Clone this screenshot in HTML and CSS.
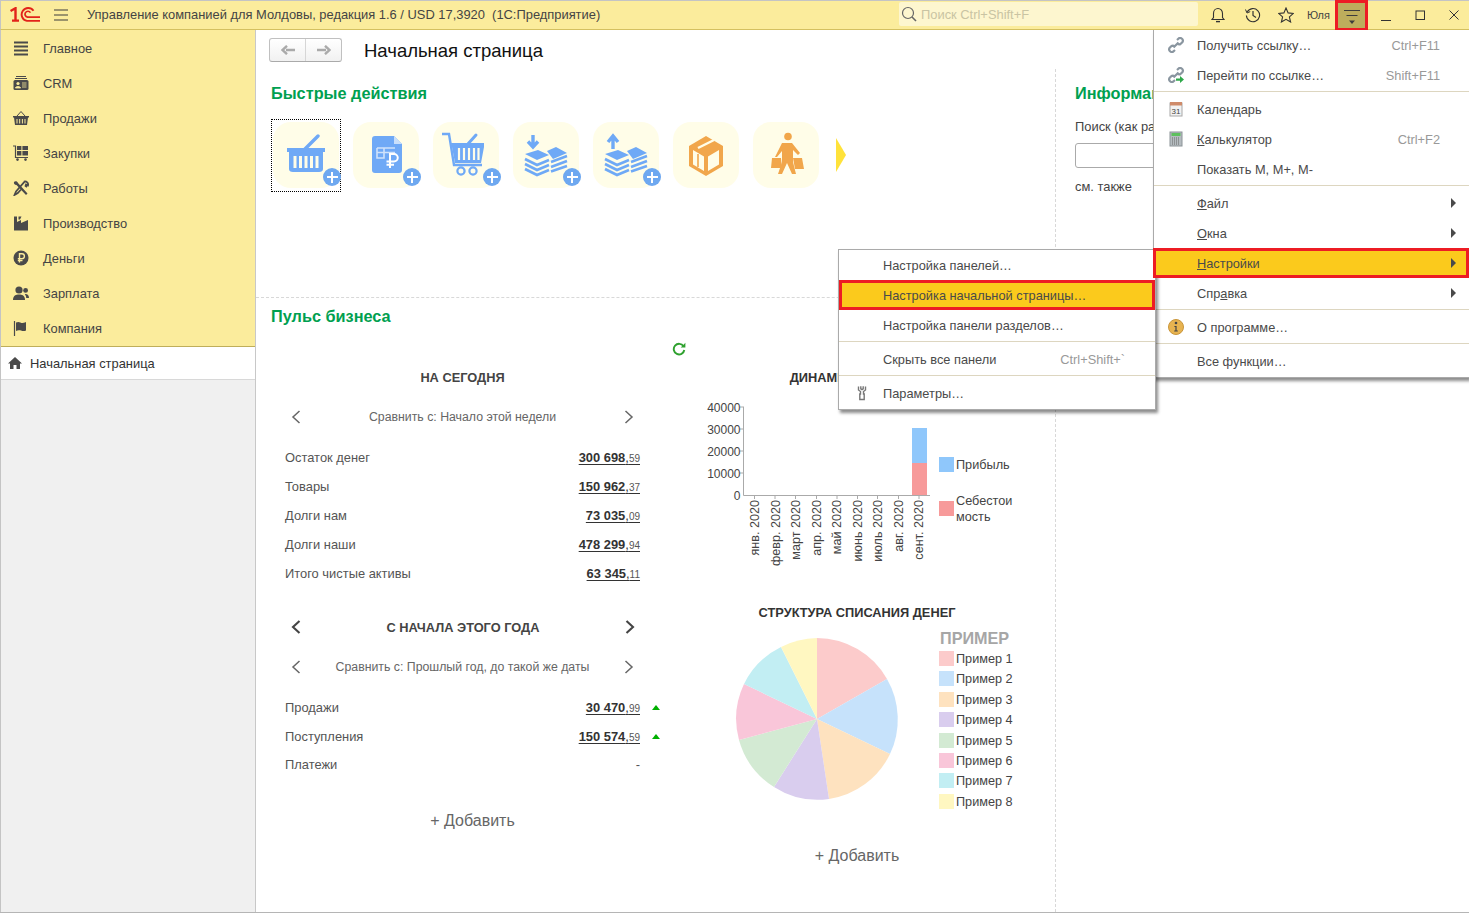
FILE: index.html
```html
<!DOCTYPE html>
<html lang="ru">
<head>
<meta charset="utf-8">
<title>Начальная страница</title>
<link rel="stylesheet" href="styles.css">
</head>
<body>
<div class="window">
  <header class="titlebar">
    <svg class="logo" viewBox="0 0 30 15" width="30" height="15">
      <path d="M0.5 4L5.5 1.2V13.5M2 13.6H9" fill="none" stroke="#e2231a" stroke-width="2.4"/>
      <path d="M23.5 3.8A6.5 6.5 0 1 0 17 13.9H30" fill="none" stroke="#e2231a" stroke-width="1.9"/>
      <path d="M20.5 5.6A3 3 0 1 0 17.5 10.2H30" fill="none" stroke="#e2231a" stroke-width="1.7"/>
    </svg>
    <svg class="burger" viewBox="0 0 14 12" width="14" height="12"><path d="M0 1H14M0 6H14M0 11H14" stroke="#3c3c3c" stroke-width="1"/></svg>
    <span class="apptitle">Управление компанией для Молдовы, редакция 1.6 / USD 17,3920&nbsp; (1С:Предприятие)</span>
    <div class="search">
      <svg viewBox="0 0 16 16" width="16" height="16"><circle cx="7" cy="7" r="5.5" fill="none" stroke="#666" stroke-width="1.2"/><path d="M11 11L15 15" stroke="#666" stroke-width="1.6"/></svg>
      <span>Поиск Ctrl+Shift+F</span>
    </div>
    <div class="tools">
      <svg class="t-bell" viewBox="0 0 16 16" width="16" height="16"><path d="M2 12.5H14L12.5 10.5V6.5C12.5 3.5 10.5 1.5 8 1.5S3.5 3.5 3.5 6.5V10.5Z" fill="none" stroke="#333" stroke-width="1.1"/><path d="M6 14.6H10" stroke="#333" stroke-width="1.4"/></svg>
      <svg class="t-hist" viewBox="0 0 16 16" width="16" height="16"><path d="M2.2 5A6.6 6.6 0 1 1 1.4 8.5" fill="none" stroke="#333" stroke-width="1.1"/><path d="M0.5 2.5L2 6L5.2 4.6" fill="none" stroke="#333" stroke-width="1"/><path d="M8 4V8.5L11 10.5" fill="none" stroke="#333" stroke-width="1.2"/></svg>
      <svg class="t-star" viewBox="0 0 16 16" width="16" height="16"><path d="M8 1L10.1 5.9L15.4 6.4L11.4 9.9L12.6 15L8 12.3L3.4 15L4.6 9.9L0.6 6.4L5.9 5.9Z" fill="none" stroke="#333" stroke-width="1.1"/></svg>
      <span class="user">Юля</span>
      <div class="menubtn">
        <svg viewBox="0 0 16 20" width="16" height="20"><path d="M0 4.5H16M2.5 9.5H13.5" stroke="#3c3c3c" stroke-width="1"/><path d="M5 14.5H11L8 18Z" fill="#3c3c3c"/></svg>
      </div>
      <svg class="w-min" viewBox="0 0 12 12" width="12" height="12"><path d="M1 11.5H11" stroke="#333" stroke-width="1"/></svg>
      <svg class="w-max" viewBox="0 0 12 12" width="12" height="12"><rect x="2" y="2" width="8.5" height="8.5" fill="none" stroke="#333" stroke-width="1"/></svg>
      <svg class="w-close" viewBox="0 0 12 12" width="12" height="12"><path d="M1.5 1.5L10.5 10.5M10.5 1.5L1.5 10.5" stroke="#333" stroke-width="1"/></svg>
    </div>
  </header>

  <div class="workspace">
    <nav class="sidebar">
      <ul class="sections">
        <li><svg viewBox="0 0 16 16" width="16" height="16"><path d="M1 2.5H15M1 6.5H15M1 10.5H15M1 14.5H15" stroke="#4a4a4a" stroke-width="2"/></svg>Главное</li>
        <li><svg viewBox="0 0 16 16" width="16" height="16"><path d="M3 1.5H13M2 3.5H14" stroke="#4a4a4a" stroke-width="1"/><rect x="0.5" y="5" width="15" height="10" rx="1.5" fill="#4a4a4a"/><circle cx="5" cy="8.5" r="1.6" fill="#fbec9c"/><path d="M2.4 13C2.6 11 7.4 11 7.6 13ZM9 8H13.5M9 10H13.5M9 12H13.5" fill="#fbec9c" stroke="#fbec9c" stroke-width=".8"/></svg>CRM</li>
        <li><svg viewBox="0 0 16 16" width="16" height="16"><path d="M4 6L8 1.5L12 6" fill="none" stroke="#4a4a4a" stroke-width="1"/><path d="M0 6H16V7.5H15L14 15H2L1 7.5H0Z" fill="#4a4a4a"/><path d="M4 9V13.5M6.7 9V13.5M9.4 9V13.5M12 9V13.5" stroke="#fbec9c" stroke-width="1"/></svg>Продажи</li>
        <li><svg viewBox="0 0 16 16" width="16" height="16"><path d="M0 1H2.5V12.5H15" fill="none" stroke="#4a4a4a" stroke-width="1.2"/><path d="M4 1H8.4V5H4ZM9.4 1H15V5H9.4ZM4 6H8.4V10.5H4ZM9.4 6H15V10.5H9.4Z" fill="#4a4a4a"/><circle cx="4.5" cy="14.6" r="1.3" fill="#4a4a4a"/><circle cx="12.5" cy="14.6" r="1.3" fill="#4a4a4a"/></svg>Закупки</li>
        <li><svg viewBox="0 0 16 16" width="16" height="16"><path d="M1 2C2 .5 4.5 1 5 3L14.5 13.5L13 15L3.5 5C1.5 5 .5 3.5 1 2Z" fill="#4a4a4a"/><path d="M11 1.5A3.2 3.2 0 0 1 15 5.5L13 4.5L12.5 6L14 7M11.6 1.6L3 11.5L1.5 15L4.8 13L8 9.5" fill="none" stroke="#4a4a4a" stroke-width="1.7"/></svg>Работы</li>
        <li><svg viewBox="0 0 16 16" width="16" height="16"><path d="M1 1.5H4V7L8 5V8L15 5V15.5H1Z" fill="#4a4a4a"/><path d="M5.5 1.5H8.5L7 4.5H5.5Z" fill="#4a4a4a"/></svg>Производство</li>
        <li><svg viewBox="0 0 16 16" width="16" height="16"><circle cx="8" cy="8" r="7.5" fill="#4a4a4a"/><path d="M6.5 12.5V3.8H9A2.3 2.3 0 0 1 9 8.6H4.8M4.8 10.5H9.5" fill="none" stroke="#fbec9c" stroke-width="1.4"/></svg>Деньги</li>
        <li><svg viewBox="0 0 16 16" width="16" height="16"><circle cx="6" cy="5" r="3.6" fill="#4a4a4a"/><path d="M0 15C0 10.5 3 9.5 6 9.5S12 10.5 12 15Z" fill="#4a4a4a"/><circle cx="12.6" cy="5.4" r="2.4" fill="#4a4a4a"/><path d="M12.5 9C14.6 9 16 10.5 16 13H13.2C13.2 11.5 12.9 10.5 11.8 9.6Z" fill="#4a4a4a"/></svg>Зарплата</li>
        <li><svg viewBox="0 0 16 16" width="16" height="16"><path d="M1.5 1V16" stroke="#4a4a4a" stroke-width="1.2"/><path d="M3 2.5C6 1 7.5 3 9.5 3S12.5 2 13 2V10.5C11 11.5 9.5 11 8 10.5S4.5 10 3 11Z" fill="#4a4a4a"/></svg>Компания</li>
      </ul>
      <div class="opened">
        <svg viewBox="0 0 14 12" width="14" height="12"><path d="M7 0L14 6.5H12V12H8.5V8H5.5V12H2V6.5H0Z" fill="#4a4a4a"/></svg>
        Начальная страница
      </div>
    </nav>

    <main class="main">
      <div class="pagehead">
        <div class="histnav">
          <span class="histbtn"><svg viewBox="0 0 14 10" width="14" height="10"><path d="M14 5H5M6 .8L1.5 5L6 9.2" fill="none" stroke="#aaa" stroke-width="2.4"/></svg></span>
          <span class="histbtn"><svg viewBox="0 0 14 10" width="14" height="10"><path d="M0 5H9M8 .8L12.5 5L8 9.2" fill="none" stroke="#aaa" stroke-width="2.4"/></svg></span>
        </div>
        <h1>Начальная страница</h1>
      </div>

      <div class="columns">
        <div class="leftcol">
          <section class="quick">
            <h2>Быстрые действия</h2>
            <div class="tiles">
              <div class="tile focused">
                <svg viewBox="0 0 66 66" width="66" height="66"><path d="M32 27L45 14" stroke="#6fa9f6" stroke-width="3.4" stroke-linecap="round"/><path d="M14 26H52V30H50V47Q50 50 46 50H20Q16 50 16 47V30H14Z" fill="#6fa9f6"/><path d="M22 34V46M27.5 34V46M33 34V46M38.5 34V46M44 34V46" stroke="#fffde8" stroke-width="3"/></svg>
                <span class="plus"></span>
              </div>
              <div class="tile">
                <svg viewBox="0 0 66 66" width="66" height="66"><path d="M22 14H41L49 22V48Q49 51 46 51H22Q19 51 19 48V17Q19 14 22 14Z" fill="#6fa9f6"/><path d="M41 14L49 22H41Z" fill="#c9dffb"/><path d="M24 26H42M24 26V36H31V26M24 30.5H42" fill="none" stroke="#cfe2fb" stroke-width="1.6"/><path d="M37 46V32H41A3.6 3.6 0 0 1 41 39.5H33.5M33.5 42.8H41" fill="none" stroke="#fff" stroke-width="2"/></svg>
                <span class="plus"></span>
              </div>
              <div class="tile">
                <svg viewBox="0 0 66 66" width="66" height="66"><path d="M9 12H16L21 43H49" fill="none" stroke="#6fa9f6" stroke-width="2.4"/><path d="M34 23L43 13" stroke="#6fa9f6" stroke-width="3" stroke-linecap="round"/><path d="M18 21H51V25L48 41H22L19 25Z" fill="#6fa9f6"/><path d="M26 26V38M31 26V38M36 26V38M41 26V38M45.5 26V38" stroke="#fffde8" stroke-width="2.2"/><circle cx="28" cy="49" r="3.6" fill="none" stroke="#6fa9f6" stroke-width="2.2"/><circle cx="40" cy="49" r="3.6" fill="none" stroke="#6fa9f6" stroke-width="2.2"/></svg>
                <span class="plus"></span>
              </div>
              <div class="tile">
                <svg viewBox="0 0 66 66" width="66" height="66"><path d="M20 13V24M15 19.5L20 25L25 19.5" fill="none" stroke="#6fa9f6" stroke-width="3.4"/><path d="M12 32L25 28L36 33L24 38ZM34 29L43 25L54 31L40 37Z" fill="#6fa9f6"/><path d="M12 37L24 43L36 38M12 42L24 48L36 43M12 47L24 53L36 48M38 40L54 34M38 45L54 39M38 49.5L54 44" fill="none" stroke="#6fa9f6" stroke-width="2.6"/></svg>
                <span class="plus"></span>
              </div>
              <div class="tile">
                <svg viewBox="0 0 66 66" width="66" height="66"><path d="M20 27V15M15 20L20 14L25 20" fill="none" stroke="#6fa9f6" stroke-width="3.4"/><path d="M12 32L25 28L36 33L24 38ZM34 29L43 25L54 31L40 37Z" fill="#6fa9f6"/><path d="M12 37L24 43L36 38M12 42L24 48L36 43M12 47L24 53L36 48M38 40L54 34M38 45L54 39M38 49.5L54 44" fill="none" stroke="#6fa9f6" stroke-width="2.6"/></svg>
                <span class="plus"></span>
              </div>
              <div class="tile">
                <svg viewBox="0 0 66 66" width="66" height="66"><path d="M33 14L50 24V44L33 54L16 44V24Z" fill="#f1a64b"/><path d="M20 28L31 34.5V49L20 42.5ZM35 34.5L46 28V42.5L35 49Z" fill="#fffde8"/><path d="M25 26L41 18" stroke="#fffde8" stroke-width="2.4"/><path d="M25 32V45" stroke="#f1a64b" stroke-width="1.6"/></svg>
              </div>
              <div class="tile">
                <svg viewBox="0 0 66 66" width="66" height="66"><circle cx="35" cy="14.5" r="3.8" fill="#f1a64b"/><path d="M29 21H39L47 31L45 33L40 28V40L43 52H39L34 41L29 52H25L29 40V29L24 35H22Z" fill="#f1a64b"/><path d="M19 36H28L29 46H18ZM40 36H49L51 47H42Z" fill="#f1a64b"/></svg>
              </div>
              <span class="more"></span>
            </div>
          </section>

          <section class="pulse">
            <h2>Пульс бизнеса</h2>
            <div class="refresh">
              <svg viewBox="0 0 14 14" width="14" height="14"><path d="M11.5 4.2A5.3 5.3 0 1 0 12.3 8" fill="none" stroke="#2fa12f" stroke-width="1.9"/><path d="M8.7 5.4H13.4V.8Z" fill="#2fa12f"/></svg>
            </div>
            <div class="pulsecols">
              <div class="metrics">
                <h3 class="mhead">НА СЕГОДНЯ</h3>
                <div class="compare">
                  <svg viewBox="0 0 10 14" width="10" height="14"><path d="M8.5 1L2 7L8.5 13" fill="none" stroke="#666" stroke-width="1.5"/></svg>
                  <span>Сравнить с: Начало этой недели</span>
                  <svg viewBox="0 0 10 14" width="10" height="14"><path d="M1.5 1L8 7L1.5 13" fill="none" stroke="#666" stroke-width="1.5"/></svg>
                </div>
                <div class="row"><span>Остаток денег</span><a class="num"><b>300 698</b>,<small>59</small></a></div>
                <div class="row"><span>Товары</span><a class="num"><b>150 962</b>,<small>37</small></a></div>
                <div class="row"><span>Долги нам</span><a class="num"><b>73 035</b>,<small>09</small></a></div>
                <div class="row"><span>Долги наши</span><a class="num"><b>478 299</b>,<small>94</small></a></div>
                <div class="row"><span>Итого чистые активы</span><a class="num"><b>63 345</b>,<small>11</small></a></div>

                <h3 class="mhead second">
                  <svg viewBox="0 0 10 14" width="10" height="14"><path d="M8.5 1L2 7L8.5 13" fill="none" stroke="#444" stroke-width="2.1"/></svg>
                  <span>С НАЧАЛА ЭТОГО ГОДА</span>
                  <svg viewBox="0 0 10 14" width="10" height="14"><path d="M1.5 1L8 7L1.5 13" fill="none" stroke="#444" stroke-width="2.1"/></svg>
                </h3>
                <div class="compare">
                  <svg viewBox="0 0 10 14" width="10" height="14"><path d="M8.5 1L2 7L8.5 13" fill="none" stroke="#666" stroke-width="1.5"/></svg>
                  <span>Сравнить с: Прошлый год, до такой же даты</span>
                  <svg viewBox="0 0 10 14" width="10" height="14"><path d="M1.5 1L8 7L1.5 13" fill="none" stroke="#666" stroke-width="1.5"/></svg>
                </div>
                <div class="row"><span>Продажи</span><a class="num"><b>30 470</b>,<small>99</small></a><i class="up"></i></div>
                <div class="row"><span>Поступления</span><a class="num"><b>150 574</b>,<small>59</small></a><i class="up"></i></div>
                <div class="row tight"><span>Платежи</span><span class="dash">-</span></div>
                <div class="add">+ Добавить</div>
              </div>

              <div class="charts">
                <h3 class="chead">ДИНАМИКА ПРОДАЖ</h3>
                <svg class="chart barchart" viewBox="690 397 334 195" width="334" height="195">
                  <path d="M743.5 407V495.5H930M740 407H744M740 429H744M740 451H744M740 473H744M754.5 495V499M775 495V499M795.5 495V499M816.5 495V499M837 495V499M857.5 495V499M877.5 495V499M898.5 495V499M919 495V499" fill="none" stroke="#aaa" stroke-width="1"/>
                  <rect x="912" y="428" width="15" height="35" fill="#8fc7fb"/>
                  <rect x="912" y="463" width="15" height="32" fill="#f79a9a"/>
                  <g class="ylabels">
                    <text x="740.5" y="411.5">40000</text><text x="740.5" y="433.5">30000</text><text x="740.5" y="455.5">20000</text><text x="740.5" y="477.5">10000</text><text x="740.5" y="499.5">0</text>
                  </g>
                  <g class="xlabels">
                    <text transform="translate(759 500) rotate(-90)">янв. 2020</text>
                    <text transform="translate(779.5 500) rotate(-90)">февр. 2020</text>
                    <text transform="translate(800 500) rotate(-90)">март 2020</text>
                    <text transform="translate(821 500) rotate(-90)">апр. 2020</text>
                    <text transform="translate(841 500) rotate(-90)">май 2020</text>
                    <text transform="translate(862 500) rotate(-90)">июнь 2020</text>
                    <text transform="translate(882 500) rotate(-90)">июль 2020</text>
                    <text transform="translate(903 500) rotate(-90)">авг. 2020</text>
                    <text transform="translate(923 500) rotate(-90)">сент. 2020</text>
                  </g>
                  <rect x="939" y="457" width="15" height="15" fill="#8fc7fb"/>
                  <text class="leg" x="956" y="469">Прибыль</text>
                  <rect x="939" y="501" width="15" height="15" fill="#f79a9a"/>
                  <text class="leg" x="956" y="505">Себестои</text>
                  <text class="leg" x="956" y="521">мость</text>
                </svg>
                <h3 class="chead">СТРУКТУРА СПИСАНИЯ ДЕНЕГ</h3>
                <svg class="chart piechart" viewBox="690 632 334 204" width="334" height="204">
                  <path d="M817 719L817 638A81 81 0 0 1 887 679Z" fill="#fccbcb"/>
                  <path d="M817 719L887 679A81 81 0 0 1 890 754Z" fill="#c6e2fb"/>
                  <path d="M817 719L890 754A81 81 0 0 1 829 799Z" fill="#fee2bf"/>
                  <path d="M817 719L829 799A81 81 0 0 1 774 787Z" fill="#d9cdee"/>
                  <path d="M817 719L774 787A81 81 0 0 1 739 740Z" fill="#d3ead3"/>
                  <path d="M817 719L739 740A81 81 0 0 1 744 684Z" fill="#f9c6d9"/>
                  <path d="M817 719L744 684A81 81 0 0 1 781 647Z" fill="#c2eef3"/>
                  <path d="M817 719L781 647A81 81 0 0 1 817 638Z" fill="#fff7c1"/>
                  <text class="legtitle" x="940" y="644">ПРИМЕР</text>
                  <rect x="939" y="651" width="15" height="15" fill="#fccbcb"/><text class="leg" x="956" y="663">Пример 1</text>
                  <rect x="939" y="671" width="15" height="15" fill="#c6e2fb"/><text class="leg" x="956" y="683">Пример 2</text>
                  <rect x="939" y="692" width="15" height="15" fill="#fee2bf"/><text class="leg" x="956" y="704">Пример 3</text>
                  <rect x="939" y="712" width="15" height="15" fill="#d9cdee"/><text class="leg" x="956" y="724">Пример 4</text>
                  <rect x="939" y="733" width="15" height="15" fill="#d3ead3"/><text class="leg" x="956" y="745">Пример 5</text>
                  <rect x="939" y="753" width="15" height="15" fill="#f9c6d9"/><text class="leg" x="956" y="765">Пример 6</text>
                  <rect x="939" y="773" width="15" height="15" fill="#c2eef3"/><text class="leg" x="956" y="785">Пример 7</text>
                  <rect x="939" y="794" width="15" height="15" fill="#fff7c1"/><text class="leg" x="956" y="806">Пример 8</text>
                </svg>
                <div class="add">+ Добавить</div>
              </div>
            </div>
          </section>
        </div>

        <aside class="rightcol">
          <h2>Информация</h2>
          <div class="findlabel">Поиск (как работает)</div>
          <div class="findinput"></div>
          <div class="seealso">см. также</div>
        </aside>
      </div>
    </main>
  </div>

  <div class="menu mainmenu">
    <div class="mi"><svg viewBox="0 0 16 16" width="16" height="16"><path d="M9 3L11 1.2Q12.5 .4 14 1.8T14.5 5L12.5 7Q11 8 9.5 6.6M7 13L5 14.8Q3.5 15.6 2 14.2T1.5 11L3.5 9Q5 8 6.5 9.4M5.5 10.5L10.5 5.5" fill="none" stroke="#8a96a0" stroke-width="2.2"/></svg><span>Получить ссылку…</span><em>Ctrl+F11</em></div>
    <div class="mi"><svg viewBox="0 0 16 16" width="16" height="16"><path d="M9 3L11 1.2Q12.5 .4 14 1.8T14.5 5L12.5 7Q11 8 9.5 6.6M7 13L5 14.8Q3.5 15.6 2 14.2T1.5 11L3.5 9Q5 8 6.5 9.4M5.5 10.5L10.5 5.5" fill="none" stroke="#8a96a0" stroke-width="2.2"/><path d="M8 11.5H12V9L16 12.5L12 16V13.7H8Z" fill="#2ea84a"/></svg><span>Перейти по ссылке…</span><em>Shift+F11</em></div>
    <hr>
    <div class="mi"><svg viewBox="0 0 16 16" width="16" height="16"><rect x="2" y="2" width="12" height="13" fill="#f2f2f2" stroke="#a8a8a8"/><rect x="2" y="1" width="12" height="3.5" fill="#cf8b6a"/><text x="8" y="13" class="cal">31</text></svg><span>Кален<u>д</u>арь</span></div>
    <div class="mi"><svg viewBox="0 0 16 16" width="16" height="16"><rect x="2" y="1" width="12" height="14" fill="#b5bcc0" stroke="#8c9498"/><rect x="3.5" y="2" width="9" height="3" fill="#5ec05e"/><path d="M4 7H12M4 9H12M4 11H12M4 13H12" stroke="#666" stroke-width="1" stroke-dasharray="1 1"/></svg><span><u>К</u>алькулятор</span><em>Ctrl+F2</em></div>
    <div class="mi"><i class="noicon"></i><span>Показать M, M+, M-</span></div>
    <hr>
    <div class="mi sub"><i class="noicon"></i><span><u>Ф</u>айл</span></div>
    <div class="mi sub"><i class="noicon"></i><span><u>О</u>кна</span></div>
    <div class="mi sub active"><i class="noicon"></i><span><u>Н</u>астройки</span></div>
    <div class="mi sub"><i class="noicon"></i><span>Спр<u>а</u>вка</span></div>
    <hr>
    <div class="mi"><svg viewBox="0 0 16 16" width="16" height="16"><circle cx="8" cy="8" r="7.5" fill="#e7b350" stroke="#c9953a"/><circle cx="8" cy="4" r="1.3" fill="#444"/><path d="M6.4 7H8.6V11.5H9.8V12.6H6.2V11.5H7.4V8H6.4Z" fill="#444"/></svg><span>О программе…</span></div>
    <hr>
    <div class="mi"><i class="noicon"></i><span>Все функции…</span></div>
  </div>

  <div class="menu submenu">
    <div class="mi"><i class="noicon"></i><span>Настройка панелей…</span></div>
    <div class="mi active"><i class="noicon"></i><span>Настройка начальной страницы…</span></div>
    <div class="mi"><i class="noicon"></i><span>Настройка панели разделов…</span></div>
    <hr>
    <div class="mi"><i class="noicon"></i><span>Скрыть все панели</span><em>Ctrl+Shift+`</em></div>
    <hr>
    <div class="mi"><svg viewBox="0 0 16 16" width="16" height="16"><path d="M4.5 1.5V5L6.5 6.5V9H5.8V14.5H10.2V9H9.5V6.5L11.5 5V1.5M6.8 1.3V3.8L8 4.6L9.2 3.8V1.3" fill="none" stroke="#777" stroke-width="1.4"/></svg><span>Параметры…</span></div>
  </div>
</div>
</body>
</html>
```

FILE: styles.css
```css
* { box-sizing: border-box; }
html, body { margin: 0; height: 100%; }
body { font: 12.9px "Liberation Sans", Arial, sans-serif; color: #444; background: #fff; overflow: hidden; }
h1, h2, h3, ul { margin: 0; padding: 0; }
ul { list-style: none; }

.window { position: relative; width: 1469px; height: 913px; display: flex; flex-direction: column; border-bottom: 1px solid #b5b5b5; overflow: hidden; }

/* title bar */
.titlebar { flex: 0 0 30px; display: flex; align-items: center; background: #fbec9c; border-top: 1px solid #c4c4c4; border-left: 1px solid #c4c4c4; border-bottom: 1px solid #d4c060; padding-left: 9px; }
.logo { flex: none; margin-top: -1px; }
.burger { flex: none; margin-left: 14px; }
.apptitle { margin: -2px 0 0 19px; color: #444; white-space: nowrap; flex: 1; }
.search { flex: none; width: 299px; height: 24px; margin-top: -2px; background: #fdf6cf; border-radius: 2px; display: flex; align-items: center; gap: 4px; padding-left: 2px; color: #c9c4a3; }
.tools { flex: none; display: flex; align-items: center; }
.t-bell { margin-left: 12px; }
.t-hist { margin-left: 19px; }
.t-star { margin-left: 17px; }
.user { margin-left: 13px; font-size: 11px; width: 28px; color: #444; }
.menubtn { width: 33px; height: 31px; margin: -1px 0 -2px 0; background: #bdad5c; border: 3px solid #ed1c24; display: flex; align-items: center; justify-content: center; }
.w-min { margin-left: 12px; }
.w-max { margin-left: 22px; }
.w-close { margin-left: 22px; margin-right: 9px; }

/* layout */
.workspace { flex: 1; display: flex; min-height: 0; }
.sidebar { flex: 0 0 256px; display: flex; flex-direction: column; background: #f0f0f0; border-left: 1px solid #c4c4c4; border-right: 1px solid #c8c8c8; }
.sections { background: #fbec9c; border-bottom: 1px solid #bfae5a; padding-top: 1px; }
.sections li { height: 35px; display: flex; align-items: center; gap: 14px; padding-left: 12px; padding-bottom: 1px; color: #444; }
.sections svg { flex: none; }
.opened { height: 33px; background: #fff; border-bottom: 1px solid #d8d8d8; display: flex; align-items: center; gap: 8px; padding-left: 7px; color: #333; }

.main { flex: 1; min-width: 0; display: flex; flex-direction: column; }
.pagehead { height: 39px; padding: 8px 0 0 13px; display: flex; align-items: flex-start; }
.histnav { width: 73px; height: 24px; display: flex; border: 1px solid #c0c0c0; border-bottom-color: #aaa; border-radius: 3px; background: linear-gradient(#fff, #f1f1f1); }
.histbtn { flex: 1; display: flex; align-items: center; justify-content: center; }
.histbtn + .histbtn { border-left: 1px solid #d6d6d6; }
h1 { font-size: 18.5px; font-weight: 400; color: #111; line-height: 24px; margin: 1px 0 0 22px; }

.columns { flex: 1; display: flex; min-height: 0; }
.leftcol { flex: 0 0 800px; border-right: 1px dashed #d8d8d8; display: flex; flex-direction: column; }
h2 { font-size: 16.3px; line-height: 20px; font-weight: 700; color: #00a050; }

.quick { height: 229px; border-bottom: 1px dashed #d8d8d8; padding: 14px 0 0 15px; }
.tiles { display: flex; align-items: center; gap: 14px; margin: 19px 0 0 2px; }
.tile { position: relative; width: 66px; height: 66px; background: #fffde8; border-radius: 18px; flex: none; }
.tile > svg { display: block; filter: blur(.3px); }
.tile.focused::before { content: ""; box-sizing: border-box; position: absolute; left: -2px; top: -3px; width: 70px; height: 73px; border: 1px dotted #000; }
.plus { position: absolute; left: 50px; top: 46px; width: 18px; height: 18px; border-radius: 50%; background: linear-gradient(#fff, #fff) center / 11px 2.4px no-repeat, linear-gradient(#fff, #fff) center / 2.4px 11px no-repeat, #6ea8f0; }
.more { width: 0; height: 0; margin-left: 3px; border-style: solid; border-width: 17px 0 17px 10px; border-color: transparent transparent transparent #ffe23a; }

.pulse { padding: 8px 0 0 15px; flex: 1; }
.refresh { width: 415px; height: 31px; padding-bottom: 1px; display: flex; justify-content: flex-end; align-items: flex-end; }
.pulsecols { display: flex; }
.metrics { width: 375px; margin-left: 14px; flex: none; }
.mhead { width: 355px; height: 40px; display: flex; align-items: center; justify-content: center; font-size: 12.8px; font-weight: 700; color: #444; }
.mhead.second { justify-content: space-between; padding: 0 5px 0 6px; margin-top: 19px; }
.compare { width: 355px; height: 40px; margin-bottom: 6px; display: flex; align-items: center; justify-content: space-between; padding: 0 6px; color: #666; font-size: 12.3px; }
.row { height: 29px; display: grid; grid-template-columns: 1fr auto 20px; align-items: center; color: #555; }
.row.tight { margin-top: -1px; }
.num { grid-column: 2; color: #333; text-decoration: underline; text-underline-offset: 2px; }
.num b { font-weight: 700; }
.num small { font-size: 10px; color: #555; }
.dash { grid-column: 2; color: #555; }
.up { grid-column: 3; justify-self: end; width: 0; height: 0; border-style: solid; border-width: 0 4.5px 5px; border-color: transparent transparent #00b000; }
.add { height: 40px; display: flex; align-items: center; justify-content: center; font-size: 16px; color: #666; }
.metrics .add { width: 375px; margin-top: 22px; }
.charts { width: 334px; margin-left: 30px; flex: none; }
.chead { height: 40px; padding-top: 1px; display: flex; align-items: center; justify-content: center; font-size: 12.8px; font-weight: 700; color: #333; white-space: nowrap; }
.chart { display: block; overflow: visible; }
.ylabels text { text-anchor: end; font-size: 12px; fill: #444; }
.xlabels text { text-anchor: end; font-size: 12.6px; fill: #444; }
.leg { font-size: 12.7px; fill: #444; }
.legtitle { font-size: 16.2px; font-weight: 700; fill: #a6a6a6; }

.rightcol { padding: 14px 0 0 19px; min-width: 0; white-space: nowrap; }
.findlabel { margin-top: 16px; line-height: 16px; color: #444; }
.findinput { width: 200px; height: 25px; margin-top: 8px; border: 1px solid #aaa; border-radius: 3px; }
.seealso { margin-top: 11px; line-height: 16px; color: #444; }

/* popup menus */
.menu { position: absolute; background: #fff; box-shadow: 2px 3px 3px rgba(0,0,0,.45); border: 1px solid #aaa; font-size: 12.8px; }
.mainmenu { left: 1153px; top: 30px; width: 316px; height: 348px; border-top: 0; border-right: 0; }
.submenu { left: 838px; top: 249px; width: 318px; height: 161px; }
.mi { height: 30px; display: flex; align-items: center; color: #4a4a4a; position: relative; }
.mainmenu .mi { padding: 0 29px 0 15px; margin-left: -1px; }
.submenu .mi { padding: 0 30px 0 15px; }
.mi svg, .noicon { flex: none; width: 16px; height: 16px; margin-right: 13px; }
.mi span { flex: 1; white-space: nowrap; }
.mi em { font-style: normal; color: #999; }
hr { margin: 1px 0 2px; height: 1px; border: 0; background: #ddd6c0; }
.sub::after { content: ""; position: absolute; right: 13px; top: 10px; border-style: solid; border-width: 5px 0 5px 5px; border-color: transparent transparent transparent #4a4a4a; }
.active { background: #fbca1c; outline: 3px solid #ed1c24; outline-offset: -3px; }
.mainmenu .active { z-index: 2; }
.cal { font-size: 8px; text-anchor: middle; fill: #444; }
```
